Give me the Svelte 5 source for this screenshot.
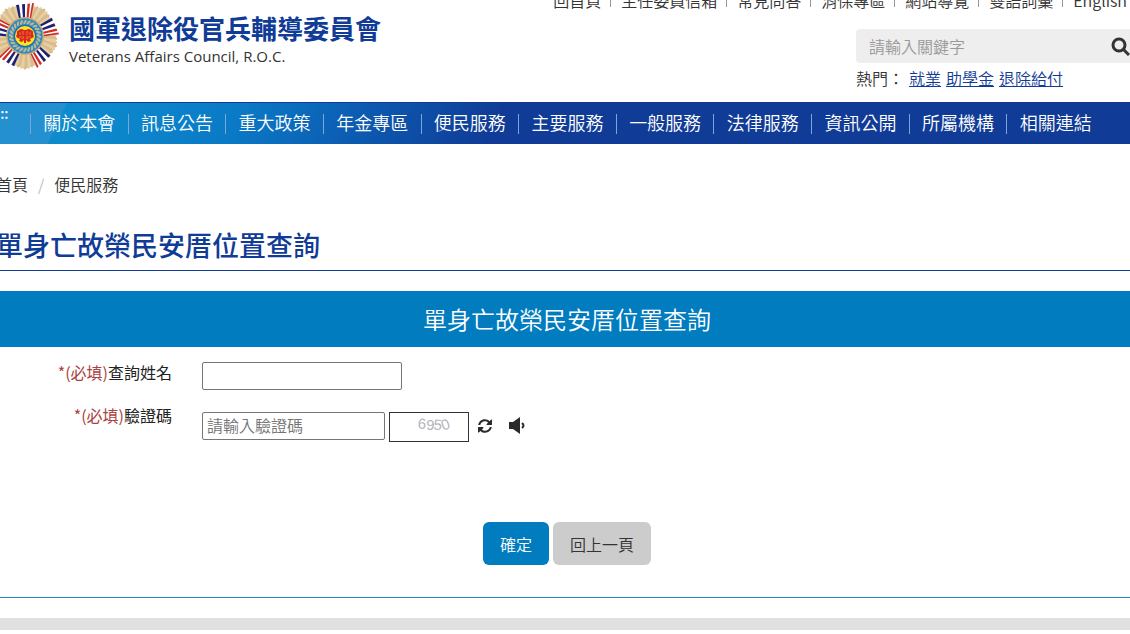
<script>
    const topLinks = ["回首頁", "主任委員信箱", "常見問答", "消保專區", "網站導覽", "雙語詞彙", "English"];
    const hotWords = ["就業", "助學金", "退除給付"];
    const menu = [
        "關於本會",
        "訊息公告",
        "重大政策",
        "年金專區",
        "便民服務",
        "主要服務",
        "一般服務",
        "法律服務",
        "資訊公開",
        "所屬機構",
        "相關連結",
    ];

    // emblem: five striped ribbons with gold rays fanned between them
    const ribbons = [0, 72, 144, 216, 288];
    const rays = [-24, -16, -8, 0, 8, 16, 24];
    const leaves = Array.from({ length: 24 }, (_, i) => i * 15);

    let keyword = $state("");
    let name = $state("");
    let code = $state("");
</script>

<div class="page">
    <header>
        <a class="brand" href="#home">
            <svg class="emblem" viewBox="-35 -35 70 70" aria-hidden="true">
                <circle r="26" fill="#dcc295" />
                {#each ribbons as angle}
                    <g transform="rotate({angle + 36})">
                        {#each rays as ray}
                            <path
                                d="M-2-17L-2.8-30L0-33L2.8-30L2-17Z"
                                fill={ray % 16 ? "#e5cfa6" : "#d9bc88"}
                                transform="rotate({ray * 0.8}) translate(0 {Math.abs(ray) / 12 - 1})"
                            />
                        {/each}
                    </g>
                {/each}
                {#each ribbons as angle}
                    <g transform="rotate({angle})">
                        <path d="M-6-17L-9-31L9-33L6-17Z" fill="#fff" />
                        <path d="M-6-17L-9-31L-6-31.3L-4-17Z" fill="#20206e" />
                        <path d="M-2-17L-3-31.7L0-32L0-17Z" fill="#20206e" />
                        <path d="M1.5-17L2.5-32.2L5-32.5L3.5-17Z" fill="#cf2b24" />
                        <path d="M4.5-17L7-32.7L9-33L6-17Z" fill="#cf2b24" />
                    </g>
                {/each}
                <circle r="19" fill="#c8ab76" />
                <circle r="17.5" fill="#2f87c3" />
                {#each leaves as angle}
                    <ellipse cy="-14" rx="1.2" ry="2.6" fill="#b6b795" transform="rotate({angle}) rotate(35 0 -14)" />
                {/each}
                <circle r="11" fill="#1769ac" />
                <circle r="10" fill="#ffe51c" />
                <path
                    d="M-1-6Q-4-8-6-6Q-9-5-8-2Q-10 1-7 2L-5 3L-6 5L-3 6L-1 4V7H1V4L3 6L6 5L5 3L7 2Q10 1 8-2Q9-5 6-6Q4-8 1-6Z"
                    fill="#d92723"
                />
                <path
                    d="M-5-4V-1M-2-5V-1M2-5V-1M5-4V-1M-6 1H-1M1 1H6M-3 3L-1 2M3 3L1 2"
                    stroke="#f6ae20"
                    stroke-width="0.6"
                    fill="none"
                />
            </svg>
            <span class="names">
                <strong>國軍退除役官兵輔導委員會</strong>
                <span class="english">Veterans Affairs Council, R.O.C.</span>
            </span>
        </a>

        <div class="tools">
            <ul class="top-links">
                {#each topLinks as link}
                    <li><a href="#top">{link}</a></li>
                {/each}
            </ul>
            <form class="search" role="search">
                <input type="text" aria-label="請輸入關鍵字" placeholder="請輸入關鍵字" bind:value={keyword} />
                <button type="button" aria-label="搜尋">
                    <svg viewBox="0 0 19 19" width="19" height="19">
                        <circle cx="8" cy="8" r="6" />
                        <path d="M12 12L18 18" />
                    </svg>
                </button>
            </form>
            <div class="hot">
                <span>熱門：</span>
                {#each hotWords as word}
                    <a href="#hot">{word}</a>
                {/each}
            </div>
        </div>
    </header>

    <nav class="menu">
        <a class="access" href="#menu">:::</a>
        <ul>
            {#each menu as item}
                <li><a href="#menu">{item}</a></li>
            {/each}
        </ul>
    </nav>

    <main>
        <div class="crumbs">
            <a href="#home">首頁</a>
            <span>/</span>
            <a href="#service">便民服務</a>
        </div>
        <h1>單身亡故榮民安厝位置查詢</h1>

        <form class="query">
            <h2>單身亡故榮民安厝位置查詢</h2>
            <div class="row">
                <label for="name"><em>*(必填)</em>查詢姓名</label>
                <input id="name" type="text" bind:value={name} />
            </div>
            <div class="row">
                <label for="code"><em>*(必填)</em>驗證碼</label>
                <div class="fields">
                    <input id="code" type="text" placeholder="請輸入驗證碼" bind:value={code} />
                    <svg class="captcha" viewBox="0 0 80 30" role="img" aria-label="驗證碼圖片">
                        <text x="28" y="17" transform="rotate(4 32 12)">6</text>
                        <text x="37" y="18">9</text>
                        <text x="45" y="18" transform="rotate(5 49 12)">5</text>
                        <text x="53" y="18" transform="rotate(-20 57 12)">0</text>
                    </svg>
                    <button class="icon" type="button" aria-label="更新驗證碼">
                        <svg viewBox="0 0 512 512" width="16" height="16">
                            <path
                                d="M40 222C52 116 143 40 250 40c58 0 112 22 152 60l50-50c10-10 28-3 28 12v142c0 10-8 18-18 18H320c-15 0-22-18-12-28l46-46c-28-26-65-41-104-41-67 0-124 45-143 105-2 6-8 10-14 10zM472 290c-12 106-103 182-210 182-58 0-112-22-152-60l-50 50c-10 10-28 3-28-12V308c0-10 8-18 18-18h142c15 0 22 18 12 28l-46 46c28 26 65 41 104 41 67 0 124-45 143-105 2-6 8-10 14-10z"
                            />
                        </svg>
                    </button>
                    <button class="icon" type="button" aria-label="播放驗證碼">
                        <svg viewBox="1 0 18 20" width="18" height="20">
                            <path d="M1 6H5L12 1V18L5 13H1Z" />
                            <path d="M14 7Q17 9.5 14 12" fill="none" stroke="currentColor" stroke-width="2" />
                        </svg>
                    </button>
                </div>
            </div>
            <div class="actions">
                <button class="primary" type="button">確定</button>
                <button type="button">回上一頁</button>
            </div>
        </form>
    </main>
    <footer></footer>
</div>

<style>
    :global(body) {
        margin: 0;
        background: #fff;
    }

    .page {
        overflow: hidden;
        font-family: "Noto Sans CJK TC", sans-serif;
        font-size: 16px;
        font-weight: 350;
        line-height: 24px;
        color: #333;
    }

    .page * {
        box-sizing: border-box;
    }

    a {
        color: inherit;
        text-decoration: none;
    }

    ul {
        list-style: none;
        margin: 0;
        padding: 0;
    }

    input,
    button {
        font: inherit;
        color: inherit;
    }

    header {
        display: flex;
        justify-content: space-between;
        height: 102px;
    }

    .brand {
        display: flex;
        gap: 9px;
        margin-left: -10px;
        padding-top: 1px;
    }

    .emblem {
        width: 70px;
        height: 70px;
    }

    .names {
        display: flex;
        flex-direction: column;
        padding-top: 9px;
    }

    .names strong {
        font-size: 26px;
        font-weight: 700;
        line-height: 36px;
        color: #103b96;
    }

    .english {
        font-family: "Open Sans", "Noto Sans", sans-serif;
        font-size: 15px;
        font-weight: 400;
        line-height: 20px;
    }

    .tools {
        display: flex;
        flex-direction: column;
        align-items: flex-end;
    }

    .top-links {
        display: flex;
        margin-top: -12px;
        padding-right: 3px;
    }

    .top-links li {
        display: flex;
        align-items: center;
    }

    .top-links li + li::before {
        content: "";
        height: 14px;
        margin: 0 10px 0 9px;
        border-left: 1px solid #999;
    }

    .search {
        display: flex;
        align-items: center;
        width: 274px;
        height: 34px;
        margin-top: 17px;
        border-radius: 4px 0 0 4px;
        background: #eee;
    }

    .search input {
        flex: 1;
        min-width: 0;
        padding: 0 13px;
        border: 0;
        background: none;
    }

    .search input::placeholder {
        color: #999;
    }

    .search button {
        display: flex;
        padding: 0;
        border: 0;
        background: none;
    }

    .search svg {
        fill: none;
        stroke: #333;
        stroke-width: 3;
    }

    .hot {
        display: flex;
        gap: 5px;
        width: 274px;
        margin-top: 3px;
    }

    .hot a {
        color: #103b96;
        text-decoration: underline;
    }

    .menu {
        display: flex;
        height: 42px;
        border-top: 1px solid #103b96;
        color: #fff;
        background:
            linear-gradient(115deg, #2590cf 0, #2590cf 60px, transparent 61px),
            linear-gradient(115deg, #0d8bcd 80px, #0a7ac6 220px, #0c5cb2 330px, #103b96 460px);
    }

    .access {
        width: 30px;
        margin-left: -4px;
        font-size: 14px;
        font-weight: 500;
        line-height: 20px;
    }

    .menu ul {
        flex: 1;
        display: grid;
        grid-template-columns: repeat(11, 1fr);
        align-items: center;
        margin-left: 4px;
        padding-right: 26px;
    }

    .menu li {
        height: 20px;
        border-left: 1px solid #7ba7d8;
        font-size: 18px;
        line-height: 16px;
        text-align: center;
        white-space: nowrap;
    }

    main {
        border-bottom: 1px solid #2a80bf;
    }

    .crumbs {
        display: flex;
        gap: 10px;
        margin-left: -4px;
        padding-top: 28px;
    }

    .crumbs span {
        color: #bbb;
    }

    h1 {
        margin: 0 0 20px -4px;
        padding: 28px 0 5px;
        border-bottom: 1px solid #103b96;
        font-size: 27px;
        font-weight: 500;
        line-height: 41px;
        color: #103b96;
    }

    h2 {
        margin: 0;
        padding-left: 4px;
        font-size: 24px;
        font-weight: 350;
        line-height: 56px;
        text-align: center;
        color: #fff;
        background: #007cbf;
    }

    .row {
        display: grid;
        grid-template-columns: 172px 1fr;
        column-gap: 30px;
        padding-top: 15px;
    }

    .row label {
        font-weight: 400;
        line-height: 20px;
        text-align: right;
        color: #222;
    }

    .row em {
        font-style: normal;
        color: #a94442;
    }

    .row input {
        width: 200px;
        height: 28px;
        padding: 0 4px 3px;
        border: 1px solid #767676;
        border-radius: 2px;
        background: #fff;
    }

    .fields {
        display: flex;
        align-items: flex-start;
        gap: 4px;
        padding: 7px 0 1px;
    }

    .row .fields input {
        width: 183px;
    }

    .fields input::placeholder {
        color: #757575;
    }

    .captcha {
        width: 80px;
        height: 30px;
        border: 1px solid #333;
        font-family: "Liberation Sans", sans-serif;
        font-size: 16px;
        fill: #b5b5bd;
    }

    .icon {
        display: flex;
        align-items: center;
        height: 28px;
        margin-right: 4px;
        padding: 0 4px;
        border: 0;
        color: #2b2b2b;
        background: none;
        fill: currentColor;
    }

    .actions {
        display: flex;
        justify-content: center;
        gap: 4px;
        padding: 79px 0 32px 4px;
    }

    .actions button {
        height: 43px;
        padding: 0 17px;
        border: 0;
        border-radius: 6px;
        background: #ccc;
    }

    .actions .primary {
        color: #fff;
        background: #007cbf;
    }

    footer {
        height: 12px;
        margin: 20px 0 4px;
        background: #e1e1e1;
    }
</style>
